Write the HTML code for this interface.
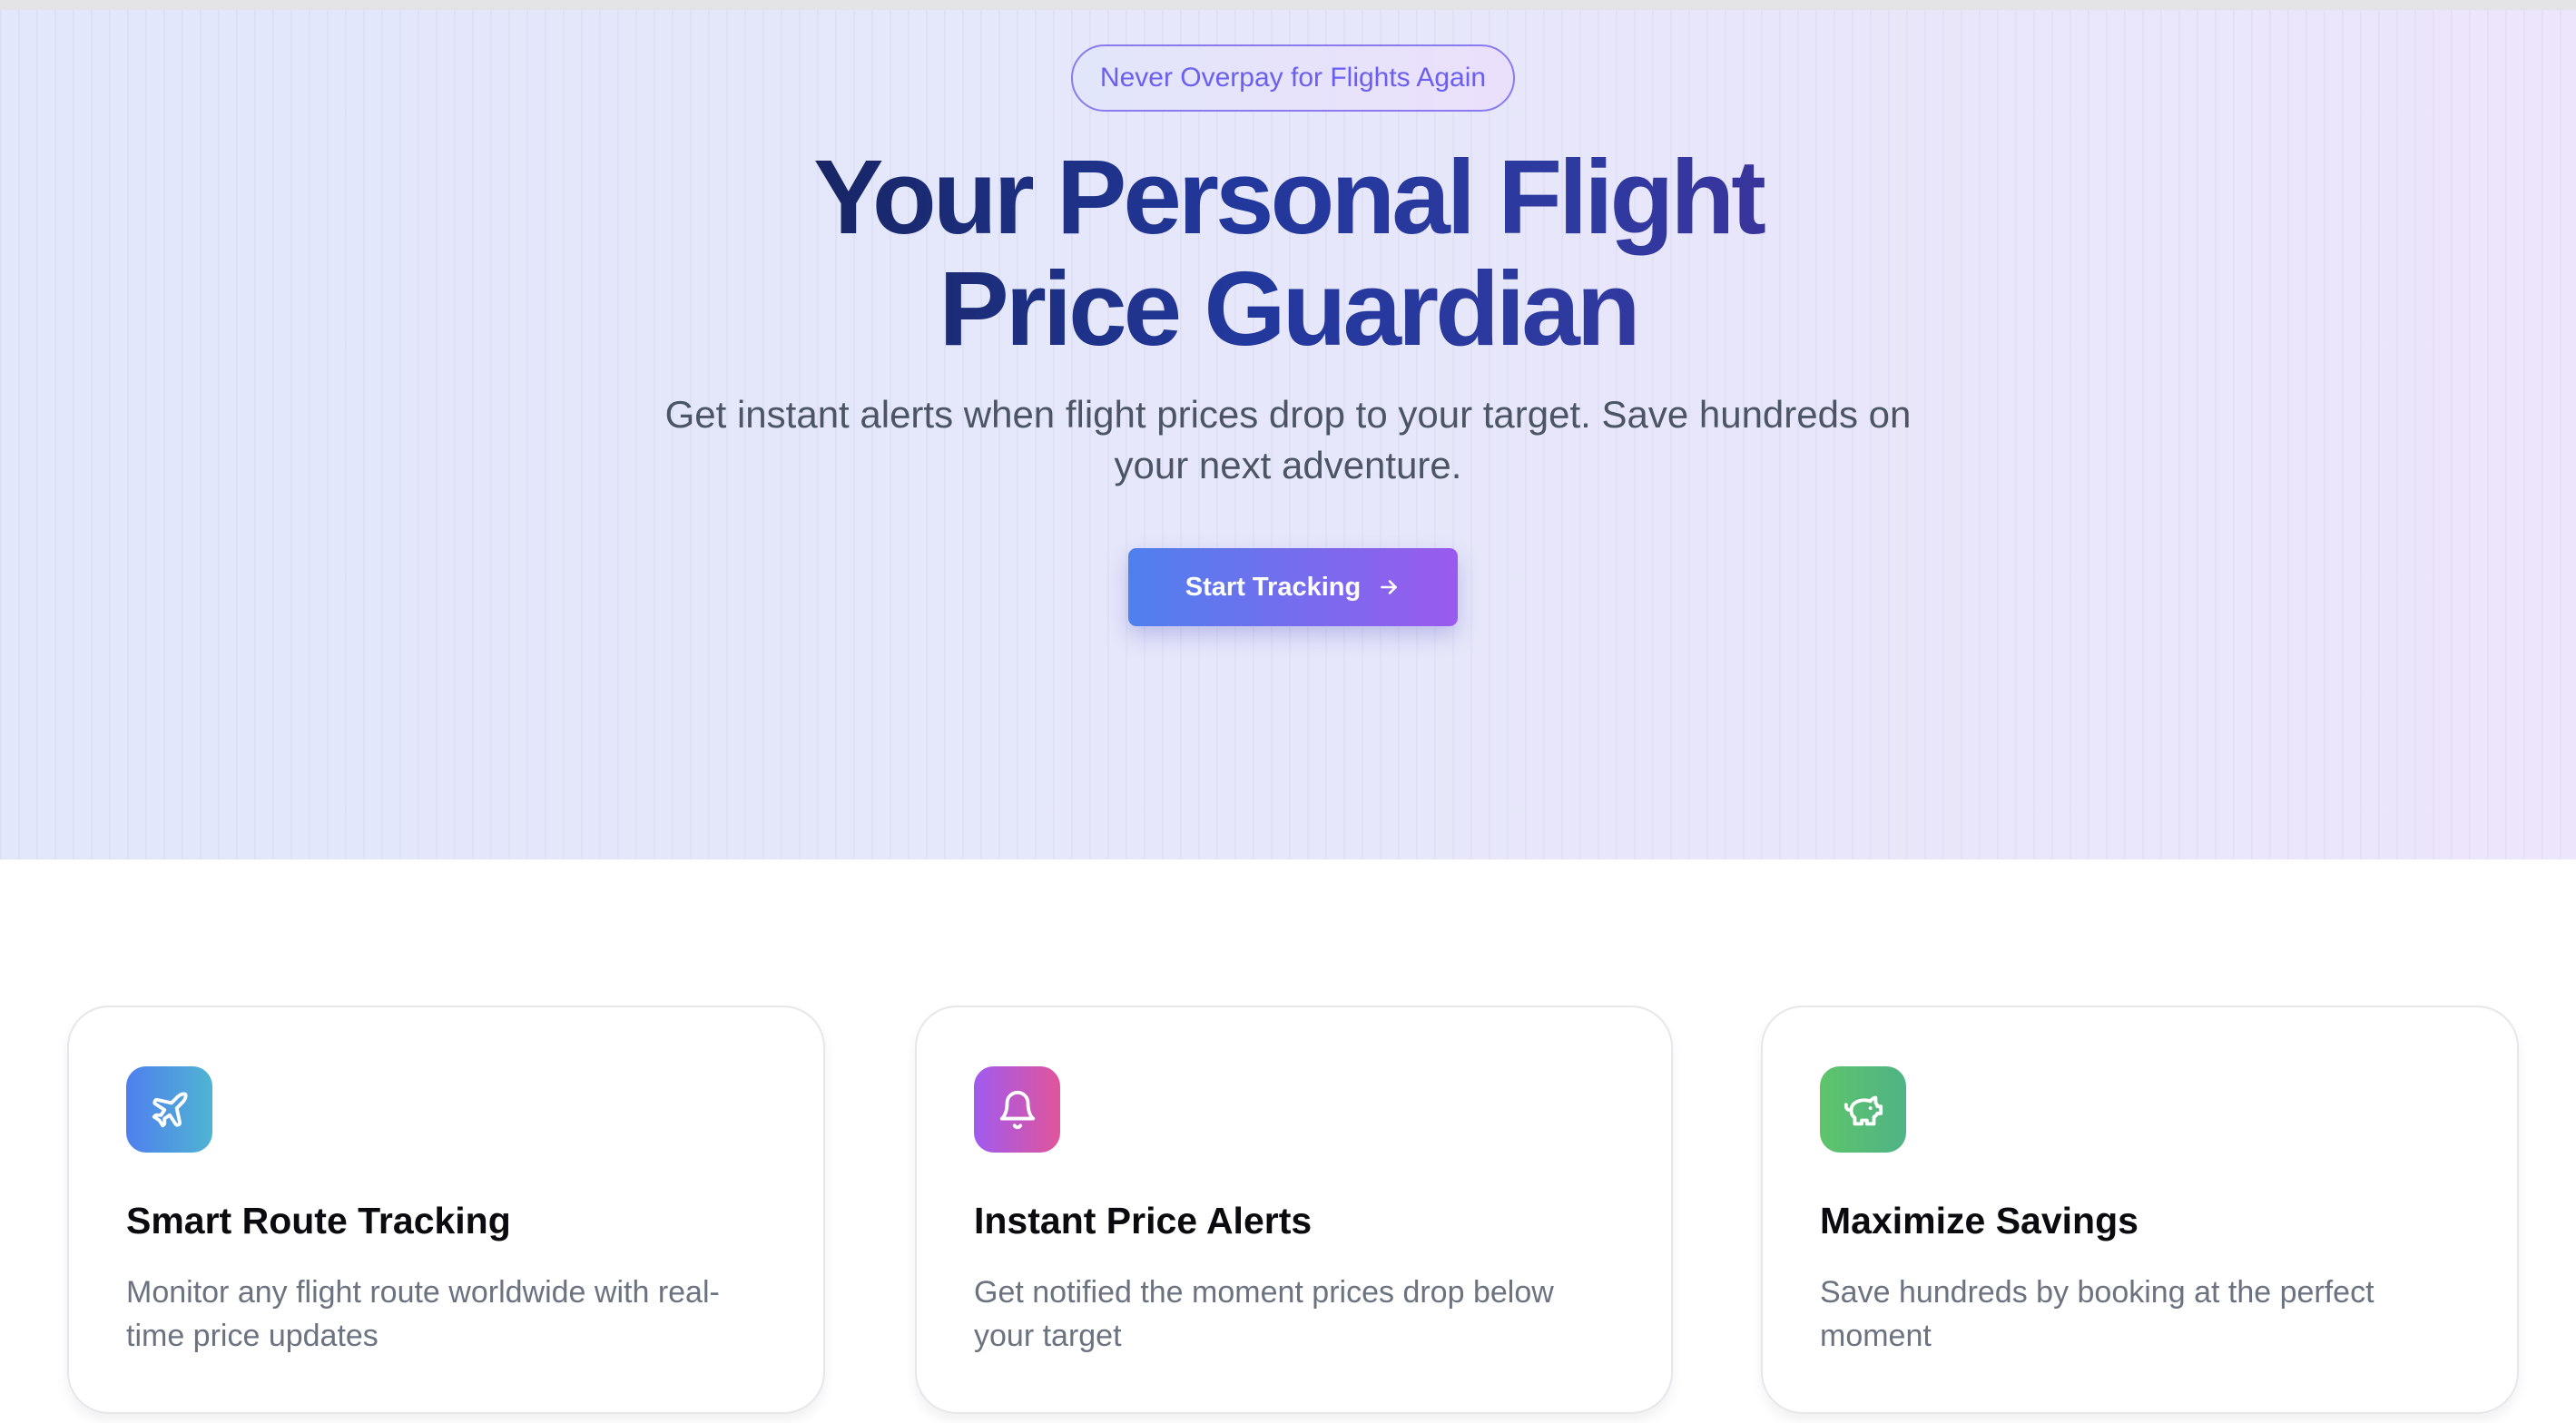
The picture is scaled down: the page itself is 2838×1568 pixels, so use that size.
<!DOCTYPE html>
<html><head><meta charset="utf-8"><style>
*{margin:0;padding:0;box-sizing:border-box}
html,body{width:2838px;height:1568px;overflow:hidden;background:#fff;font-family:"Liberation Sans",sans-serif}
.top{height:11px;background:#e4e4e6}
.hero{position:absolute;top:11px;left:0;width:2838px;height:936px;
background:linear-gradient(90deg,#e2e7fb 0%,#e6e7fa 50%,#ece5fb 100%);}
.hero:before{content:"";position:absolute;inset:0;
background:repeating-linear-gradient(90deg,rgba(120,120,170,.06) 0 2px,transparent 2px 20px);}
.badge{position:absolute;left:1180px;top:38px;width:489px;height:74px;border-radius:37px;
border:2px solid #8a7cf0;background:linear-gradient(90deg,#e2e6fb,#ebe0fb);
display:flex;align-items:center;justify-content:center;font-size:30px;color:#6a5ff0;}
h1{position:absolute;left:0;width:2838px;top:145px;text-align:center;font-size:116px;line-height:123px;
font-weight:700;letter-spacing:-4px;
background:linear-gradient(90deg,#121a45 0%,#172460 30%,#22389c 48%,#2f3aa0 62%,#4a2a96 80%);
-webkit-background-clip:text;background-clip:text;color:transparent;}
.sub{position:absolute;left:0;width:2838px;top:418px;text-align:center;font-size:42px;line-height:56px;color:#4b5563}
.btn{position:absolute;left:1243px;top:593px;width:363px;height:86px;border-radius:9px;
background:linear-gradient(90deg,#4f80ee,#9a5aee);color:#fff;font-size:29px;font-weight:700;
display:flex;align-items:center;justify-content:center;gap:18px;box-shadow:0 10px 24px rgba(90,90,200,.3)}
.card{position:absolute;top:1108px;width:835px;height:450px;border:2px solid #e5e7eb;border-radius:46px;background:#fff;
box-shadow:0 8px 14px rgba(0,0,0,.06)}
.ic{position:absolute;left:63px;top:65px;width:95px;height:95px;border-radius:22px;display:flex;align-items:center;justify-content:center}
.card h3{position:absolute;left:63px;top:212px;font-size:41px;font-weight:700;color:#0b0b0f}
.card p{position:absolute;left:63px;top:290px;width:670px;font-size:34px;line-height:48px;color:#6b7280}
</style></head><body>
<div class="top"></div>
<div class="hero">
<div class="badge">Never Overpay for Flights Again</div>
<h1>Your Personal Flight<br>Price Guardian</h1>
<div class="sub">Get instant alerts when flight prices drop to your target. Save hundreds on<br>your next adventure.</div>
<div class="btn">Start Tracking <svg width="26" height="26" viewBox="0 0 24 24" fill="none" stroke="#fff" stroke-width="2.4" stroke-linecap="round" stroke-linejoin="round"><path d="M5 12h14M13 6l6 6-6 6"/></svg></div>
</div>
<div class="card" style="left:74px">
<div class="ic" style="background:linear-gradient(90deg,#4f7fee,#4fb4d2)"><svg width="46" height="46" viewBox="0 0 24 24" fill="none" stroke="#fff" stroke-width="2" stroke-linecap="round" stroke-linejoin="round"><path d="M17.8 19.2 16 11l3.5-3.5C21 6 21.5 4 21 3c-1-.5-3 0-4.5 1.5L13 8 4.8 6.2c-.5-.1-.9.1-1.1.5l-.3.5c-.2.5-.1 1 .3 1.3L9 12l-2 3H4l-1 1 3 2 2 3 1-1v-3l3-2 3.5 5.3c.3.4.8.5 1.3.3l.5-.2c.4-.3.6-.7.5-1.2z"/></svg></div>
<h3>Smart Route Tracking</h3>
<p>Monitor any flight route worldwide with real-time price updates</p>
</div>
<div class="card" style="left:1008px">
<div class="ic" style="background:linear-gradient(90deg,#a05af0,#e0559a)"><svg width="46" height="46" viewBox="0 0 24 24" fill="none" stroke="#fff" stroke-width="2" stroke-linecap="round" stroke-linejoin="round"><path d="M6 8a6 6 0 0 1 12 0c0 7 3 9 3 9H3s3-2 3-9"/><path d="M10.3 21a1.94 1.94 0 0 0 3.4 0"/></svg></div>
<h3>Instant Price Alerts</h3>
<p>Get notified the moment prices drop below your target</p>
</div>
<div class="card" style="left:1940px">
<div class="ic" style="background:linear-gradient(90deg,#5ec46a,#4fb386)"><svg width="46" height="46" viewBox="0 0 24 24" fill="none" stroke="#fff" stroke-width="2" stroke-linecap="round" stroke-linejoin="round"><path d="M19 5c-1.5 0-2.8 1.4-3 2-3.5-1.5-11-.3-11 5 0 1.8 0 3 2 4.5V20h4v-2h3v2h4v-4c1-.5 1.7-1 2-2h2v-4h-2c0-1-.5-1.5-1-2V5z"/><path d="M2 9v1c0 1.1.9 2 2 2h1"/><path d="M16 11h.01"/></svg></div>
<h3>Maximize Savings</h3>
<p>Save hundreds by booking at the perfect moment</p>
</div>
</body></html>
